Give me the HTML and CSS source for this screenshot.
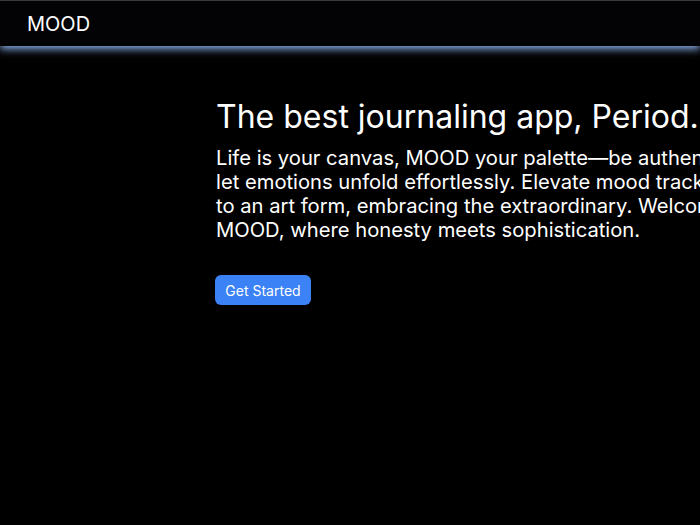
FILE: index.html
```html
<!DOCTYPE html>
<html lang="en">
<head>
<meta charset="utf-8">
<title>MOOD</title>
<link rel="stylesheet" href="styles.css">
</head>
<body>
<header class="topbar">
  <span class="brand">MOOD</span>
</header>
<main class="hero">
  <div class="hero-inner">
    <h1 class="hero-title">The best journaling app, Period.</h1>
    <p class="hero-text">Life is your canvas, MOOD your palette—be authentic, let emotions unfold effortlessly. Elevate mood tracking to an art form, embracing the extraordinary. Welcome to MOOD, where honesty meets sophistication.</p>
    <button class="cta">Get Started</button>
  </div>
</main>
</body>
</html>
```
FILE: styles.css
```css
html, body {
  margin: 0;
  padding: 0;
  background: #000;
  color: #fff;
  font-family: Inter, "Noto Sans", sans-serif;
  overflow: hidden;
  height: 100%;
}
.topbar {
  position: relative;
  z-index: 1;
  height: 45px;
  border-top: 1px solid #3a3a3a;
  background: #030306;
  display: flex;
  align-items: center;
  padding-left: 27px;
  box-shadow: 0 3px 8px #8db2ee;
}
.brand {
  font-size: 20px;
  line-height: 1;
}
.hero {
  padding-left: 216px;
  padding-top: 52px;
}
.hero-inner {
  width: 540px;
}
.hero-title {
  margin: 0;
  font-size: 32px;
  font-weight: 400;
  line-height: 1.2;
  white-space: nowrap;
}
.hero-text {
  margin: 10px 0 0;
  font-size: 20.2px;
  line-height: 24px;
}
.cta {
  display: block;
  margin-top: 33px;
  margin-left: -1px;
  background: #3b82f6;
  color: #fff;
  border: none;
  border-radius: 6px;
  font-family: Inter, "Noto Sans", sans-serif;
  font-size: 14px;
  height: 30px;
  width: 96px;
  padding: 0;
}
```
